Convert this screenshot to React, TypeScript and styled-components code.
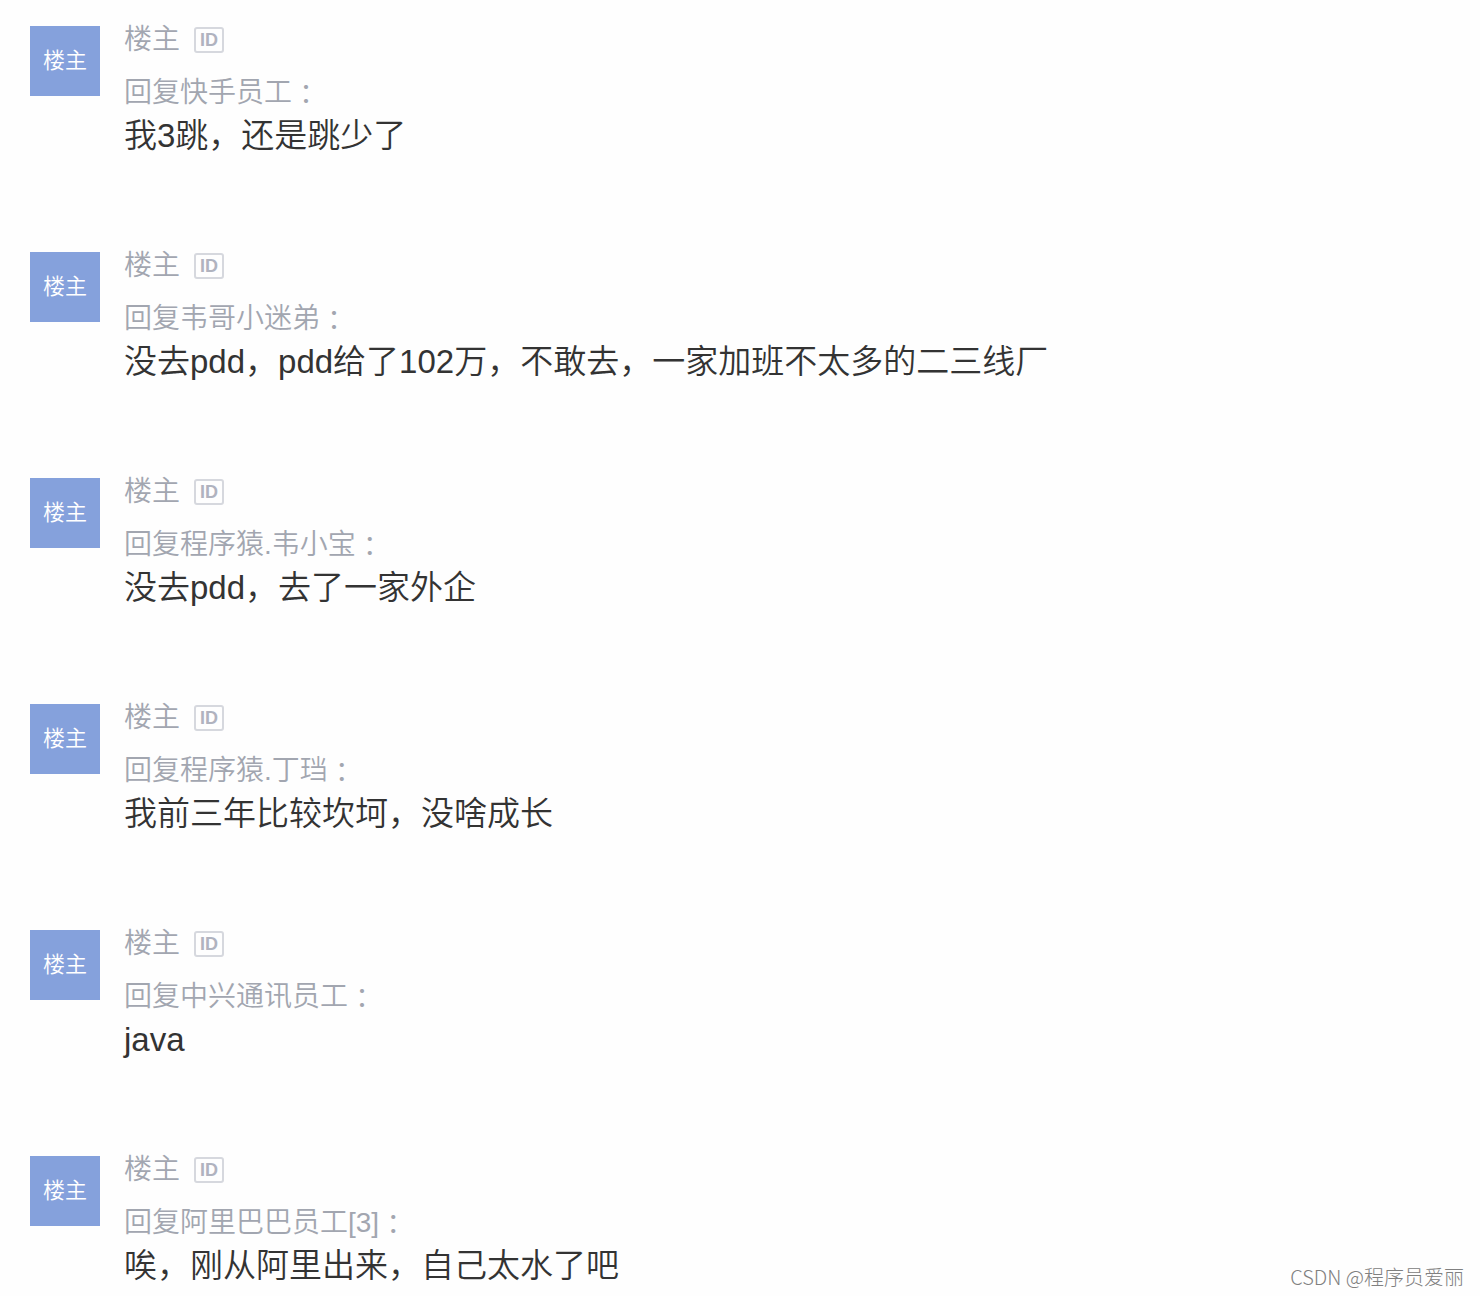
import React from "react";
import styled, { createGlobalStyle } from "styled-components";

const Global = createGlobalStyle`
  *, *::before, *::after { box-sizing: border-box; }
  body {
    margin: 0;
    background: #fefefe;
    font-family: "Liberation Sans", "Noto Sans CJK SC DemiLight", "Noto Sans CJK SC", sans-serif;
    font-weight: 350;
  }
`;

const Page = styled.main`
  position: relative;
  padding: 22px 30px 0;
`;

const List = styled.ul`
  list-style: none;
  margin: 0;
  padding: 0;
  display: flex;
  flex-direction: column;
  gap: 87px;
`;

const Item = styled.li`
  display: flex;
  align-items: flex-start;
  gap: 24px;
`;

const Avatar = styled.div`
  flex: none;
  display: flex;
  align-items: center;
  justify-content: center;
  width: 70px;
  height: 70px;
  margin-top: 4px;
  background: #85a1dc;
  color: #fff;
  font-size: 22px;
  line-height: 32px;
`;

const Body = styled.div`
  flex: 1;
  min-width: 0;
`;

const Author = styled.div`
  display: flex;
  align-items: center;
  gap: 14px;
  color: #a2a6b0;
  font-size: 28px;
  line-height: 36px;
`;

const Badge = styled.span`
  display: flex;
  align-items: center;
  justify-content: center;
  width: 30px;
  height: 26px;
  border: 2px solid #d6d8de;
  border-radius: 3px;
  color: #b0b3bf;
  font-size: 18px;
  font-weight: 700;
  line-height: 22px;
`;

const ReplyTo = styled.div`
  display: flex;
  margin-top: 17px;
  color: #a2a6b0;
  font-size: 28px;
  line-height: 36px;
`;

/* The JP cut centres the full-width colon in its cell. */
const Colon = styled.span`
  font-family: "Noto Sans CJK JP", sans-serif;
`;

const Message = styled.p`
  margin: 0;
  color: #333;
  font-size: 33px;
  line-height: 50px;
`;

const Watermark = styled.footer`
  position: absolute;
  right: 16px;
  bottom: 0;
  color: #808080;
  font-family: "Noto Sans CJK SC", sans-serif;
  font-size: 20px;
  font-weight: 300;
  line-height: 28px;
`;

const replies = [
  { to: "快手员工", text: "我3跳，还是跳少了" },
  { to: "韦哥小迷弟", text: "没去pdd，pdd给了102万，不敢去，一家加班不太多的二三线厂" },
  { to: "程序猿.韦小宝", text: "没去pdd，去了一家外企" },
  { to: "程序猿.丁珰", text: "我前三年比较坎坷，没啥成长" },
  { to: "中兴通讯员工", text: "java" },
  { to: "阿里巴巴员工[3]", text: "唉，刚从阿里出来，自己太水了吧" },
];

export default function App() {
  return (
    <Page lang="zh-CN">
      <Global />
      <List>
        {replies.map((reply) => (
          <Item key={reply.to}>
            <Avatar>楼主</Avatar>
            <Body>
              <Author>
                楼主<Badge>ID</Badge>
              </Author>
              <ReplyTo>
                <span>回复{reply.to}</span>
                <Colon lang="ja">：</Colon>
              </ReplyTo>
              <Message>{reply.text}</Message>
            </Body>
          </Item>
        ))}
      </List>
      <Watermark>CSDN @程序员爱丽</Watermark>
    </Page>
  );
}
